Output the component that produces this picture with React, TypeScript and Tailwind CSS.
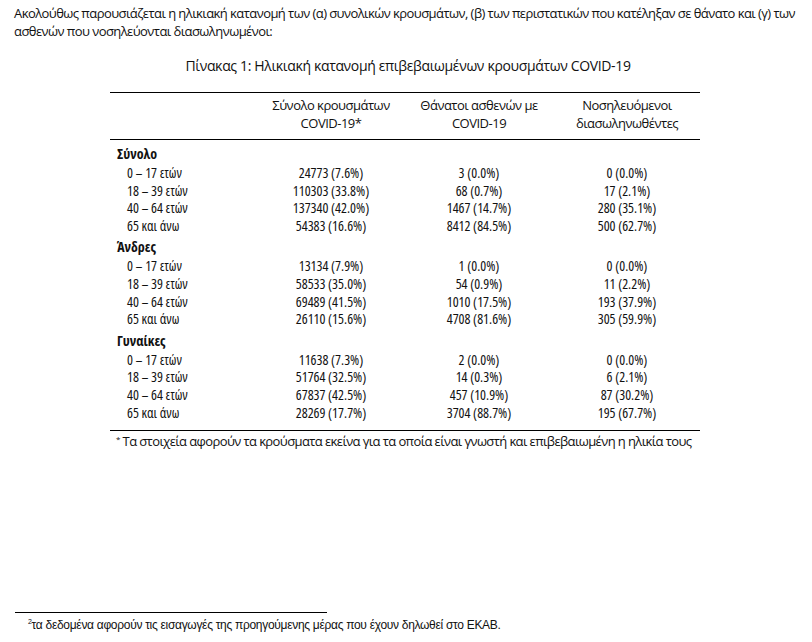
const groups = [
  {
    title: "Σύνολο",
    rows: [
      ["0 – 17 ετών", "24773 (7.6%)", "3 (0.0%)", "0 (0.0%)"],
      ["18 – 39 ετών", "110303 (33.8%)", "68 (0.7%)", "17 (2.1%)"],
      ["40 – 64 ετών", "137340 (42.0%)", "1467 (14.7%)", "280 (35.1%)"],
      ["65 και άνω", "54383 (16.6%)", "8412 (84.5%)", "500 (62.7%)"],
    ],
  },
  {
    title: "Άνδρες",
    rows: [
      ["0 – 17 ετών", "13134 (7.9%)", "1 (0.0%)", "0 (0.0%)"],
      ["18 – 39 ετών", "58533 (35.0%)", "54 (0.9%)", "11 (2.2%)"],
      ["40 – 64 ετών", "69489 (41.5%)", "1010 (17.5%)", "193 (37.9%)"],
      ["65 και άνω", "26110 (15.6%)", "4708 (81.6%)", "305 (59.9%)"],
    ],
  },
  {
    title: "Γυναίκες",
    rows: [
      ["0 – 17 ετών", "11638 (7.3%)", "2 (0.0%)", "0 (0.0%)"],
      ["18 – 39 ετών", "51764 (32.5%)", "14 (0.3%)", "6 (2.1%)"],
      ["40 – 64 ετών", "67837 (42.5%)", "457 (10.9%)", "87 (30.2%)"],
      ["65 και άνω", "28269 (17.7%)", "3704 (88.7%)", "195 (67.7%)"],
    ],
  },
];

// label | col1 centred at 331 | col2 at 479 | col3 at 628
const cols = "grid grid-cols-[148px_146px_150px_146px]";

export default function App() {
  return (
    <div className="w-[812px] h-[642px] bg-white text-[#111] font-['Open_Sans',sans-serif] text-[13px] flex flex-col">
      <p className="pl-[14px] pr-4 pt-[4px] leading-[18px] tracking-[-0.56px]">
        Ακολούθως παρουσιάζεται η ηλικιακή κατανομή των (α) συνολικών κρουσμάτων, (β) των περιστατικών που κατέληξαν σε θάνατο και (γ) των
        ασθενών που νοσηλεύονται διασωληνωμένοι:
      </p>

      <div className="mt-[16px] text-center text-[14px] tracking-[-0.35px] leading-[20px] pl-[4px]">
        Πίνακας 1: Ηλικιακή κατανομή επιβεβαιωμένων κρουσμάτων COVID-19
      </div>

      <div className="ml-[110px] w-[590px] mt-[16px]">
        <div className={`${cols} border-t-[1.5px] border-b-[1.5px] border-black pt-[3px] pb-[7px] leading-[18px] text-center text-[13px] tracking-[-0.5px]`}>
          <div />
          <div>Σύνολο κρουσμάτων<br />COVID-19*</div>
          <div>Θάνατοι ασθενών με<br />COVID-19</div>
          <div>Νοσηλευόμενοι<br />διασωληνωθέντες</div>
        </div>

        <div className="pt-[4px] border-b-[1.5px] border-black text-[14px] font-stretch-condensed">
          {groups.map((g) => (
            <div key={g.title} className="mb-[3px] last:mb-[9px]">
              <div className="pl-[7px] font-bold leading-[20px]">{g.title}</div>
              {g.rows.map((r) => (
                <div key={r[0]} className={`${cols} leading-[17.6px]`}>
                  <div className="pl-[17px]">{r[0]}</div>
                  <div className="text-center">{r[1]}</div>
                  <div className="text-center">{r[2]}</div>
                  <div className="text-center">{r[3]}</div>
                </div>
              ))}
            </div>
          ))}
        </div>

        <div className="pl-[6px] leading-[20px] text-[13px] tracking-[-0.6px] whitespace-nowrap">
          <span className="text-[8px] leading-none align-[4px]">*</span> Τα στοιχεία αφορούν τα κρούσματα εκείνα για τα οποία είναι γνωστή και επιβεβαιωμένη η ηλικία τους
        </div>
      </div>

      <div className="mt-auto mb-[9px] ml-[15px]">
        <div className="w-[312px] border-t border-black" />
        <div className="pl-[13px] pt-[4px] text-[12px] leading-[16px] font-['Liberation_Sans',sans-serif] tracking-[-0.3px]">
          <span className="text-[7px] leading-none align-[5px]">2</span>τα δεδομένα αφορούν τις εισαγωγές της προηγούμενης μέρας που έχουν δηλωθεί στο ΕΚΑΒ.
        </div>
      </div>
    </div>
  );
}
